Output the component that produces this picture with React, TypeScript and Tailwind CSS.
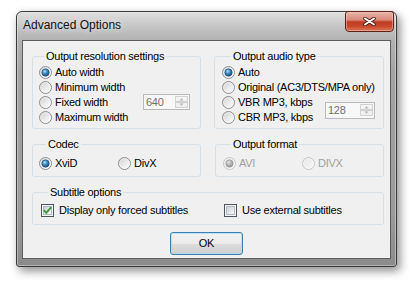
import React from "react";

type RadioProps = {
  label: string;
  checked?: boolean;
  disabled?: boolean;
  className?: string;
};

type CheckProps = {
  label: string;
  checked?: boolean;
  className?: string;
};

// shared gradients for the themed glyphs
function GlyphDefs() {
  return (
    <svg width="0" height="0" className="absolute" aria-hidden="true">
      <defs>
        <linearGradient id="radio-bg" x1="0" y1="0" x2="1" y2="1">
          <stop offset="0" stopColor="#cdcdcd" />
          <stop offset="0.6" stopColor="#eeeeee" />
          <stop offset="1" stopColor="#fdfdfd" />
        </linearGradient>
        <linearGradient id="radio-bg-off" x1="0" y1="0" x2="1" y2="1">
          <stop offset="0" stopColor="#e4e4e4" />
          <stop offset="1" stopColor="#fafafa" />
        </linearGradient>
        <radialGradient id="radio-dot" cx="0.4" cy="0.35" r="0.75">
          <stop offset="0" stopColor="#b6e6fc" />
          <stop offset="0.4" stopColor="#3f8dc8" />
          <stop offset="1" stopColor="#0f3a60" />
        </radialGradient>
        <radialGradient id="radio-dot-off" cx="0.4" cy="0.35" r="0.75">
          <stop offset="0" stopColor="#e8e8e8" />
          <stop offset="0.5" stopColor="#b0b0b0" />
          <stop offset="1" stopColor="#8a8a8a" />
        </radialGradient>
        <linearGradient id="check-bg" x1="0" y1="0" x2="1" y2="1">
          <stop offset="0" stopColor="#cbd0d6" />
          <stop offset="1" stopColor="#f8f9fa" />
        </linearGradient>
      </defs>
    </svg>
  );
}

function Radio({ label, checked, disabled, className = "" }: RadioProps) {
  return (
    <div className={`flex h-[15px] items-center gap-[3px] ${className}`}>
      <svg width="13" height="13" viewBox="0 0 13 13" className="shrink-0">
        <circle
          cx="6.5"
          cy="6.5"
          r="6"
          fill={disabled ? "url(#radio-bg-off)" : "url(#radio-bg)"}
          stroke={disabled ? "#c4c4c4" : "#8b8e91"}
        />
        <circle cx="6.5" cy="6.5" r="4.8" fill="none" stroke="#ffffff" strokeOpacity="0.55" strokeWidth="0.8" />
        {checked && (
          <circle
            cx="6.5"
            cy="6.5"
            r="3.7"
            fill={disabled ? "url(#radio-dot-off)" : "url(#radio-dot)"}
            stroke={disabled ? "#979797" : "#1b4a72"}
            strokeWidth="0.6"
          />
        )}
      </svg>
      <span className={disabled ? "text-[#a0a0a0]" : "text-black"}>{label}</span>
    </div>
  );
}

function Check({ label, checked, className = "" }: CheckProps) {
  return (
    <div className={`flex h-[15px] items-center gap-[5px] ${className}`}>
      <svg width="13" height="13" viewBox="0 0 13 13" className="shrink-0">
        <rect x="0.5" y="0.5" width="12" height="12" fill="#f6f6f6" stroke="#4a5462" />
        <rect x="2.5" y="2.5" width="8" height="8" fill="url(#check-bg)" stroke="#b3b9c0" />
        {checked && (
          <path d="M2.8 6.2 L5.3 8.8 L10.2 3.2" fill="none" stroke="#3c9a38" strokeWidth="1.9" />
        )}
      </svg>
      <span>{label}</span>
    </div>
  );
}

function Spin({ value, className = "" }: { value: string; className?: string }) {
  return (
    <div className={`flex items-center border border-[#b9b9b9] bg-[#f8f8f8] ${className}`}>
      <span className="flex-1 pl-[2px] leading-none text-[#707070]">{value}</span>
      <svg width="13" height="12" viewBox="0 0 13 12" className="mr-[1px] shrink-0">
        <rect x="0.5" y="0.5" width="12" height="5" fill="#f4f4f4" stroke="#d2d2d2" />
        <rect x="0.5" y="6.5" width="12" height="5" fill="#f0f0f0" stroke="#d2d2d2" />
        <path d="M4.5 4.5 L6.5 2.3 L8.5 4.5 Z" fill="#b4b4b4" />
        <path d="M4.5 7.5 L6.5 9.7 L8.5 7.5 Z" fill="#b4b4b4" />
      </svg>
    </div>
  );
}

function Group({
  title,
  legendClass,
  className = "",
  children,
}: {
  title: string;
  legendClass: string;
  className?: string;
  children: React.ReactNode;
}) {
  return (
    <fieldset className={`rounded-[3px] border border-[#d5dfe5] ${className}`}>
      <legend className={`h-[13px] px-[2px] leading-[13px] ${legendClass}`}>{title}</legend>
      {children}
    </fieldset>
  );
}

export default function App() {
  return (
    <div className="min-h-[284px] w-[413px] bg-white pl-[16px] pt-[11px] font-['Liberation_Sans',Arial,sans-serif]">
      <GlyphDefs />
      <div className="flex h-[256px] w-[381px] flex-col rounded-t-[6px] rounded-b-[3px] border border-[#3a3a3a] bg-[linear-gradient(to_bottom,#e0e0e0_0px,#c6c6c6_14px,#b2b2b2_28px,#a4a4a4_60px,#9a9a9a_200px,#8b8b8b_100%)] px-[5px] pb-[7px] shadow-[inset_0_0_0_1px_rgba(255,255,255,0.35),3px_4px_10px_rgba(0,0,0,0.45)]">
        {/* title bar */}
        <div className="-mx-[5px] flex h-[28px] items-start justify-between">
          <span className="pl-[6px] pt-[6px] text-[12px] leading-[15px] text-[#111] [text-shadow:0_0_6px_rgba(255,255,255,0.9)]">
            Advanced Options
          </span>
          <button className="-mt-[1px] mr-[2px] flex h-[21px] w-[49px] items-center justify-center rounded-t-[3px] rounded-b-[4px] border border-[#5a2218] bg-[linear-gradient(to_bottom,#e9b4a8_0%,#da8a7b_42%,#c23b22_52%,#c8472c_75%,#de7656_100%)] shadow-[inset_0_0_0_1px_rgba(255,210,200,0.45)]">
            <svg width="13" height="9" viewBox="0 0 13 9">
              <path d="M2 1.5 L11 7.5 M11 1.5 L2 7.5" stroke="#3e1710" strokeWidth="3.6" strokeLinecap="round" />
              <path d="M2 1.5 L11 7.5 M11 1.5 L2 7.5" stroke="#ffffff" strokeWidth="2" strokeLinecap="round" />
            </svg>
          </button>
        </div>

        {/* client area */}
        <div className="flex flex-1 flex-col border border-[#5c5c5c] bg-[#f0f0f0] pl-[9px] pr-[6px] pt-[9px] text-[11px] leading-[15px] tracking-[-0.25px] text-black">
          <div className="flex gap-[13px]">
            <Group title="Output resolution settings" legendClass="ml-[5px]" className="w-[169px] pb-[3px] pl-[6px]">
              <div className="mt-[2px] flex flex-col">
                <Radio label="Auto width" checked />
                <Radio label="Minimum width" />
                <div className="flex h-[15px] items-start">
                  <Radio label="Fixed width" className="w-[104px]" />
                  <Spin value="640" className="-mt-[1px] h-[16px] w-[47px]" />
                </div>
                <Radio label="Maximum width" />
              </div>
            </Group>
            <Group title="Output audio type" legendClass="ml-[9px]" className="w-[170px] pb-[3px] pl-[7px]">
              <div className="mt-[2px] flex flex-col">
                <Radio label="Auto" checked />
                <Radio label="Original (AC3/DTS/MPA only)" />
                <div className="flex items-center">
                  <div className="flex w-[103px] flex-col">
                    <Radio label="VBR MP3, kbps" />
                    <Radio label="CBR MP3, kbps" />
                  </div>
                  <Spin value="128" className="h-[17px] w-[50px]" />
                </div>
              </div>
            </Group>
          </div>

          <div className="mt-[9px] flex gap-[14px]">
            <Group title="Codec" legendClass="ml-[7px]" className="w-[169px] pb-[5px] pl-[6px]">
              <div className="mt-[5px] flex">
                <Radio label="XviD" checked className="w-[79px]" />
                <Radio label="DivX" />
              </div>
            </Group>
            <Group title="Output format" legendClass="ml-[8px]" className="w-[169px] pb-[5px] pl-[7px]">
              <div className="mt-[5px] flex">
                <Radio label="AVI" checked disabled className="w-[79px]" />
                <Radio label="DIVX" disabled />
              </div>
            </Group>
          </div>

          <Group title="Subtitle options" legendClass="ml-[7px]" className="mt-[9px] pb-[6px] pl-[8px]">
            <div className="mt-[4px] flex">
              <Check label="Display only forced subtitles" checked className="w-[183px]" />
              <Check label="Use external subtitles" />
            </div>
          </Group>

          <button className="ml-[138px] mt-[7px] h-[23px] w-[73px] rounded-[3px] border border-[#3c7fb1] bg-[linear-gradient(to_bottom,#f2f2f2_0%,#ebebeb_50%,#dddddd_51%,#cfcfcf_100%)] text-[11px] leading-none text-black shadow-[inset_0_0_0_1px_rgba(160,220,250,0.7)]">
            OK
          </button>
        </div>
      </div>
    </div>
  );
}
